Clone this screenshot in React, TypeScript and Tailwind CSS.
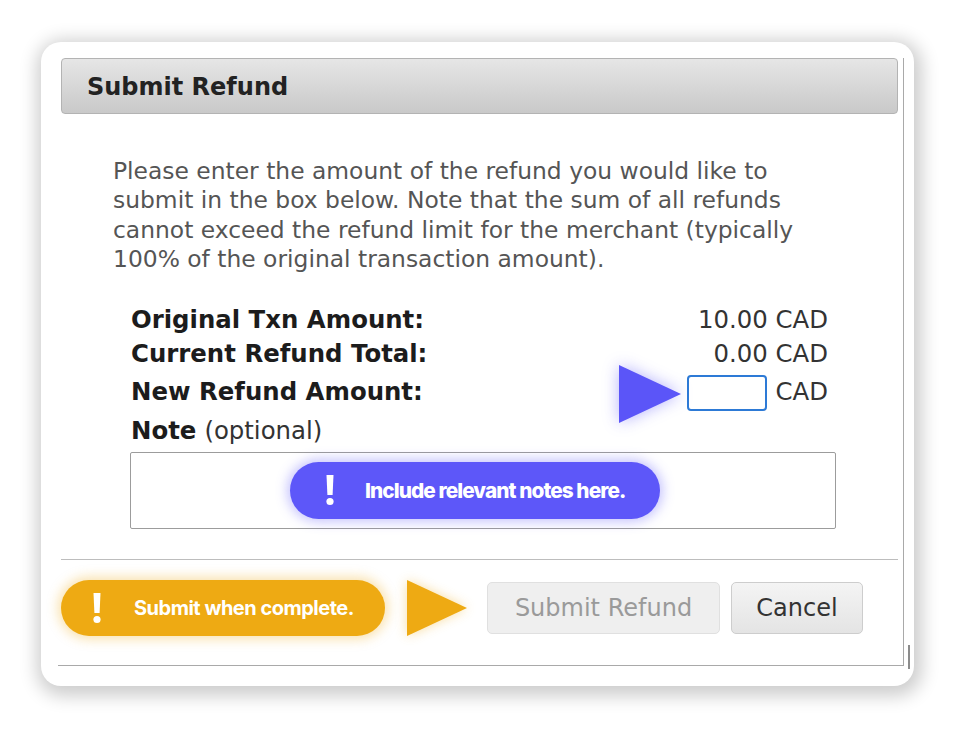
import React from 'react';

const ui = { fontFamily: '"DejaVu Sans", Verdana, sans-serif' };
const note = { fontFamily: 'Inter, "Noto Sans", sans-serif' };

const Bang: React.FC = () => (
  <svg width="10" height="32" viewBox="0 0 10 32" className="shrink-0">
    <path d="M1.5 1 H8.5 L7.6 21 H2.4 Z" fill="white" />
    <circle cx="5" cy="27.5" r="3.6" fill="white" />
  </svg>
);

const Arrow: React.FC<{ color: string; className?: string }> = ({ color, className }) => (
  <svg width="62" height="58" viewBox="0 0 62 58" className={className}>
    <polygon points="0,0 62,29 0,58" fill={color} />
  </svg>
);

interface Row {
  label: string;
  value: string;
}

const rows: Row[] = [
  { label: 'Original Txn Amount:', value: '10.00 CAD' },
  { label: 'Current Refund Total:', value: '0.00 CAD' },
];

export default function App() {
  return (
    <div className="w-[975px] h-[730px] bg-white pt-[42px] pl-[41px]" style={ui}>
      <div className="relative w-[873px] h-[644px] rounded-[20px] bg-white pt-[13px] pl-[17px] shadow-[2px_4px_18px_6px_rgba(0,0,0,0.2)]">
        <div className="w-[846px] h-[608px] border-r border-b border-[#a9a9a9]">
          {/* header */}
          <div className="ml-[3px] mt-[3px] w-[837px] h-[56px] flex items-center pl-[25px] pt-[1px] rounded-[4px] border border-[#b3b3b3] bg-gradient-to-b from-[#e6e6e6] to-[#c9c9c9]">
            <span className="text-[24px] font-bold text-[#222]">Submit Refund</span>
          </div>

          <p className="mt-[43px] pl-[55px] text-[23.4px] leading-[29.4px] text-[#555] whitespace-nowrap">
            Please enter the amount of the refund you would like to
            <br />
            submit in the box below. Note that the sum of all refunds
            <br />
            cannot exceed the refund limit for the merchant (typically
            <br />
            100% of the original transaction amount).
          </p>

          <div className="ml-[73px] mt-[29px] w-[697px] text-[24.4px]">
            {rows.map((r) => (
              <div key={r.label} className="h-[34px] flex items-center justify-between">
                <span className="font-bold text-[#1c1c1c]">{r.label}</span>
                <span className="text-[#333]">{r.value}</span>
              </div>
            ))}
            <div className="h-[42px] flex items-center justify-between">
              <span className="font-bold text-[#1c1c1c]">New Refund Amount:</span>
              <div className="flex items-center">
                <div className="relative w-[80px] h-[36px] rounded-[4px] border-2 border-[#2d7ad6] bg-white">
                  <Arrow
                    color="#5b55f8"
                    className="absolute left-[-70px] top-[-12px] drop-shadow-[0_0_8px_rgba(91,85,248,0.45)]"
                  />
                </div>
                <span className="ml-[9px] text-[#333]">CAD</span>
              </div>
            </div>
            <div className="h-[35px] flex items-center">
              <span className="font-bold text-[#1c1c1c]">Note</span>
              <span className="ml-[8px] text-[#333]">(optional)</span>
            </div>
          </div>

          {/* note box */}
          <div className="relative ml-[72px] mt-[3px] w-[706px] h-[77px] rounded-[2px] border border-[#9c9c9c] bg-white">
            <div
              className="absolute left-[159px] top-[9px] w-[370px] h-[57px] rounded-full bg-[#5d57f9] flex items-center pl-[35px] shadow-[0_0_12px_3px_rgba(93,87,249,0.35)]"
              style={note}
            >
              <Bang />
              <span className="ml-[30px] text-[20.8px] font-extrabold text-white tracking-[-0.045em]">
                Include relevant notes here.
              </span>
            </div>
          </div>

          <div className="ml-[3px] mt-[30px] w-[837px] h-[1px] bg-[#bdbdbd]" />

          {/* footer */}
          <div className="mt-[19px] h-[58px] flex items-center pl-[3px]">
            <div
              className="w-[324px] h-[56px] rounded-full bg-[#eeaa13] flex items-center pl-[31px] shadow-[0_0_12px_3px_rgba(238,170,19,0.35)]"
              style={note}
            >
              <Bang />
              <span className="ml-[32px] text-[20px] font-bold text-white tracking-[-0.025em]">
                Submit when complete.
              </span>
            </div>
            <Arrow
              color="#eeaa13"
              className="ml-[22px] w-[60px] drop-shadow-[0_0_6px_rgba(238,170,19,0.4)]"
            />
            <button className="ml-[20px] w-[233px] h-[52px] rounded-[5px] border border-[#e0e0e0] bg-[#efefef] text-[24px] text-[#9a9a9a]">
              Submit Refund
            </button>
            <button className="ml-[11px] w-[132px] h-[52px] rounded-[5px] border border-[#cdcdcd] bg-gradient-to-b from-[#f4f4f4] to-[#e4e4e4] text-[24px] text-[#333]">
              Cancel
            </button>
          </div>
        </div>
        <div className="absolute left-[867px] top-[603px] w-[2px] h-[24px] bg-[#8c8c8c]" />
      </div>
    </div>
  );
}
